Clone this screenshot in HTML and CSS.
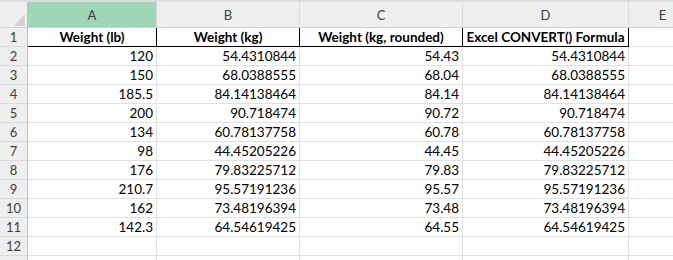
FILE: index.html
```html
<!DOCTYPE html>
<html lang="en">
<head>
  <meta charset="UTF-8">
  <meta name="viewport" content="width=device-width, initial-scale=1.0">
  <title>Weight conversion</title>
  <link rel="stylesheet" href="styles.css">
</head>
<body>
  <div class="topline"></div>
  <table class="grid">
    <colgroup>
      <col class="c-num">
      <col class="c-a">
      <col class="c-b">
      <col class="c-c">
      <col class="c-d">
      <col class="c-e">
    </colgroup>
    <thead>
      <tr>
        <th class="corner">
          <svg class="tri" width="11" height="12" viewBox="0 0 11 12"><polygon points="11,0 11,12 0,12" fill="#d4d4d4"/></svg>
        </th>
        <th class="active">A</th>
        <th>B</th>
        <th>C</th>
        <th>D</th>
        <th>E</th>
      </tr>
    </thead>
    <tbody>
      <tr class="title">
        <th>1</th>
        <td>Weight (lb)</td>
        <td>Weight (kg)</td>
        <td>Weight (kg, rounded)</td>
        <td>Excel CONVERT() Formula</td>
        <td class="blank"></td>
      </tr>
      <tr><th>2</th><td>120</td><td>54.4310844</td><td>54.43</td><td>54.4310844</td><td></td></tr>
      <tr><th>3</th><td>150</td><td>68.0388555</td><td>68.04</td><td>68.0388555</td><td></td></tr>
      <tr><th>4</th><td>185.5</td><td>84.14138464</td><td>84.14</td><td>84.14138464</td><td></td></tr>
      <tr><th>5</th><td>200</td><td>90.718474</td><td>90.72</td><td>90.718474</td><td></td></tr>
      <tr><th>6</th><td>134</td><td>60.78137758</td><td>60.78</td><td>60.78137758</td><td></td></tr>
      <tr><th>7</th><td>98</td><td>44.45205226</td><td>44.45</td><td>44.45205226</td><td></td></tr>
      <tr><th>8</th><td>176</td><td>79.83225712</td><td>79.83</td><td>79.83225712</td><td></td></tr>
      <tr><th>9</th><td>210.7</td><td>95.57191236</td><td>95.57</td><td>95.57191236</td><td></td></tr>
      <tr><th>10</th><td>162</td><td>73.48196394</td><td>73.48</td><td>73.48196394</td><td></td></tr>
      <tr><th>11</th><td>142.3</td><td>64.54619425</td><td>64.55</td><td>64.54619425</td><td></td></tr>
      <tr><th>12</th><td></td><td></td><td></td><td></td><td></td></tr>
      <tr><th></th><td></td><td></td><td></td><td></td><td></td></tr>
    </tbody>
  </table>
</body>
</html>
```

FILE: styles.css
```css
*{
  margin: 0;
  padding: 0;
  box-sizing: border-box;
}
body{
  width: 673px;
  height: 260px;
  overflow: hidden;
  background-color: #fff;
  font-family: Lato, "Liberation Sans", sans-serif;
  font-size: 13.5px;
  color: #000;
}
.topline{
  height: 2px;
  background-color: #dcdcdc;
}
.grid{
  table-layout: fixed;
  border-collapse: separate;
  border-spacing: 0;
  width: 697px;
}
.c-num{ width: 28px; }
.c-a{ width: 129px; }
.c-b{ width: 143px; }
.c-c{ width: 163px; }
.c-d{ width: 166px; }
.c-e{ width: 68px; }

thead th{
  height: 26px;
  background-color: #efefef;
  border-right: 1px solid #dadada;
  border-bottom: 1px solid #d0d0d0;
  color: #3c3c3c;
  font-size: 13px;
  font-weight: normal;
  text-align: center;
  vertical-align: middle;
}
thead .active{
  background-color: #a0d6b8;
}
thead .corner{
  text-align: right;
  vertical-align: bottom;
  padding: 0 2px 1px 0;
  border-right-color: #bdbdbd;
}
.tri{
  display: inline-block;
  vertical-align: bottom;
}

tbody th{
  height: 19px;
  background-color: #efefef;
  border-right: 1px solid #bdbdbd;
  border-bottom: 1px solid #dadada;
  color: #3c3c3c;
  font-size: 13px;
  font-weight: normal;
  text-align: center;
}
/* excel puts cell text at the bottom */
tbody td{
  height: 19px;
  padding: 0 3px;
  line-height: 17px;
  vertical-align: bottom;
  border-right: 1px solid #e1e1e1;
  border-bottom: 1px solid #e1e1e1;
  text-align: right;
  white-space: nowrap;
  overflow: hidden;
}
.title td{
  font-weight: bold;
  text-align: center;
  border-right-color: #000;
  border-bottom-color: #000;
}
.title td.blank{
  border-right-color: #e1e1e1;
  border-bottom-color: #e1e1e1;
}
```
